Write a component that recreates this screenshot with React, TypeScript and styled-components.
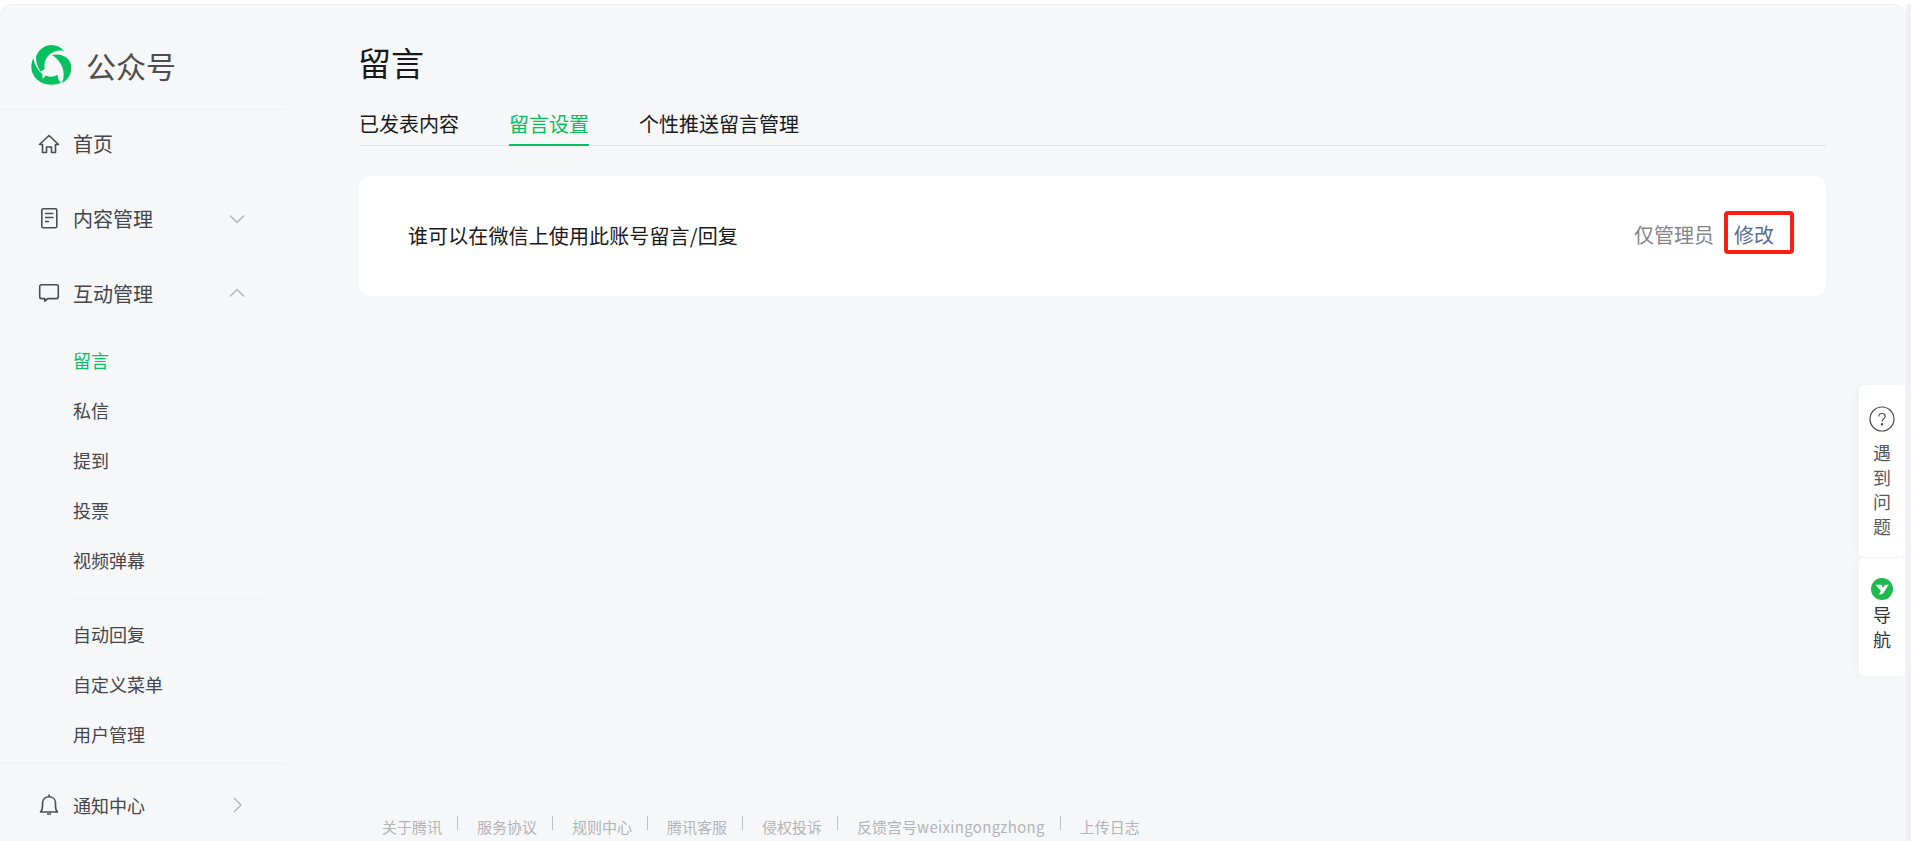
import React from "react";
import styled, { createGlobalStyle } from "styled-components";

const Global = createGlobalStyle`
  html, body { margin: 0; padding: 0; height: 100%; background: #fff; overflow: hidden; }
  #root { height: 100%; }
  * { box-sizing: border-box; }
  body { font-family: "Noto Sans CJK SC", "Liberation Sans", sans-serif; }
`;

const Page = styled.div`
  width: 1911px;
  height: 841px;
  padding-top: 4px;
  display: flex;
  position: relative;
  overflow: hidden;
  background: #fff;
`;

const Shell = styled.div`
  flex: 1;
  display: flex;
  background: #f6f7f9;
  border-top: 1px solid #ececee;
  border-top-left-radius: 12px;
  border-top-right-radius: 12px;
`;

const ScrollTrack = styled.div`
  width: 5px;
  background: #f1f1f3;
`;

const Sidebar = styled.aside`
  width: 286px;
  flex: none;
  display: flex;
  flex-direction: column;
`;

const Brand = styled.div`
  height: 105px;
  flex: none;
  padding: 40px 0 0 31px;
  display: flex;
  align-items: flex-start;
  gap: 15px;
  border-bottom: 1px solid #eeeff1;
`;

const BrandName = styled.span`
  font-size: 30px;
  line-height: 40px;
  color: #4d4d50;
`;

const Nav = styled.nav`
  display: flex;
  flex-direction: column;
  padding-top: 9px;
  flex: 1;
  min-height: 0;
`;

const NavRow = styled.div<{ $h: number; $top?: number }>`
  height: ${(p) => p.$h}px;
  flex: none;
  display: flex;
  align-items: center;
  padding: ${(p) => p.$top ?? 0}px 0 0 38px;
  font-size: 20px;
  color: #45454a;
`;

const IconSlot = styled.span`
  width: 35px;
  flex: none;
  display: flex;
  align-items: center;
`;

const RowLabel = styled.span<{ $size?: number }>`
  flex: none;
  width: 155px;
  font-size: ${(p) => p.$size ?? 20}px;
`;

const SubList = styled.div`
  padding-top: 17px;
  flex: none;
`;

const SubItem = styled.div<{ $active?: boolean }>`
  height: 50px;
  display: flex;
  align-items: center;
  padding-left: 73px;
  font-size: 18px;
  color: ${(p) => (p.$active ? "#07c160" : "#45454a")};
`;

const SubDivider = styled.div`
  height: 1px;
  margin: 13px 19px 10px 69px;
  background: #eeeff1;
`;

const NavDivider = styled.div`
  height: 1px;
  flex: none;
  margin-top: 4px;
  background: #eeeff1;
`;

const Main = styled.main`
  flex: 1;
  min-width: 0;
  display: flex;
  flex-direction: column;
  padding: 33px 80px 0 73px;
`;

const Title = styled.h1`
  margin: 0 0 0 -1px;
  font-size: 33px;
  line-height: 48px;
  font-weight: 400;
  color: #191919;
`;

const Tabs = styled.div`
  margin-top: 24px;
  height: 36px;
  display: flex;
  gap: 50px;
  border-bottom: 1px solid #e1e2e5;
`;

const Tab = styled.div<{ $active?: boolean }>`
  height: 36px;
  font-size: 20px;
  line-height: 28px;
  color: ${(p) => (p.$active ? "#07c160" : "#191919")};
  border-bottom: 2px solid ${(p) => (p.$active ? "#07c160" : "transparent")};
`;

const Card = styled.section`
  margin-top: 30px;
  height: 120px;
  flex: none;
  display: flex;
  align-items: center;
  justify-content: space-between;
  background: #fff;
  border-radius: 12px;
  padding: 0 52px 2px 49px;
`;

const CardLabel = styled.span`
  font-size: 20px;
  letter-spacing: 0.12px;
  color: #191919;
`;

const CardRight = styled.div`
  display: flex;
  align-items: center;
  gap: 20px;
  font-size: 20px;
  line-height: 24px;
`;

const Muted = styled.span`
  color: #85858a;
`;

const LinkText = styled.a`
  position: relative;
  color: #576b95;
`;

const Highlight = styled.span`
  position: absolute;
  left: -10px;
  right: -20px;
  top: -12px;
  bottom: -7px;
  border: 4px solid #fb1f12;
  border-radius: 4px;
`;

const Spacer = styled.div`
  flex: 1;
`;

const Footer = styled.footer`
  display: flex;
  align-items: center;
  height: 30px;
  padding-left: 23px;
  font-size: 15px;
  color: #b3b3b6;
`;

const FooterItem = styled.span`
  display: flex;
  align-items: center;
`;

const Latin = styled.span`
  letter-spacing: 0.33px;
`;

const FooterSep = styled.i`
  display: inline-block;
  width: 1px;
  height: 14px;
  margin: -6px 19px 0 15px;
  background: #c2c2c6;
`;

const Widget = styled.div`
  position: absolute;
  right: 6px;
  top: 385px;
  width: 46px;
  display: flex;
  flex-direction: column;
  gap: 1px;
`;

const WidgetPart = styled.div<{ $dark?: boolean; $h: number; $top: number }>`
  height: ${(p) => p.$h}px;
  padding-top: ${(p) => p.$top}px;
  background: #fff;
  border-radius: 5px;
  box-shadow: -4px 0 10px rgba(0, 0, 0, 0.025);
  display: flex;
  flex-direction: column;
  align-items: center;
  font-size: 18px;
  line-height: 24.700px;
  color: ${(p) => (p.$dark ? "#333336" : "#59595c")};
`;

const WidgetIcon = styled.span<{ $gap: number }>`
  display: flex;
  margin-bottom: ${(p) => p.$gap}px;
`;

const Logo = () => (
  <svg width="40" height="40" viewBox="0 0 40 40" fill="#07c160">
    <path d="M5 11.500C7.500 4.500 14 0 20.500 0C25.500 0 30 2 33 6C27 4.800 21.500 6.500 17.500 10.500C14 14 12.800 19 13.800 24L9.500 26.500C6.500 22 4.800 16.500 5 11.500Z" />
    <path d="M21 10C27 8.500 33 9.800 37 14C41.500 19 41 27 37.300 32.500C35.700 35 33.500 37 31 38C33 33 33.300 27 31 21.500C29 16.500 25.500 12.800 21 10Z" />
    <path d="M2.300 13C-.8 20-.3 27.500 4.500 33C10 39.500 20.500 41.500 30 37.800C28 36 26.500 33 26.500 29.800C22.500 32 18.800 32.300 15 30.500L11.800 33.800L11 28.800C6.500 25 3.500 19.500 2.300 13Z" />
  </svg>
);

const iconProps = { width: 22, height: 22, viewBox: "0 0 22 22", fill: "none", stroke: "#4d4d50", strokeWidth: 1.6 };

const HomeIcon = () => (
  <svg {...iconProps}>
    <path d="M1.500 11.500L11 2.500L20.500 11.500H17.500V19.500H13.500V14H8.500V19.500H4.500V11.500Z" strokeLinejoin="round" />
  </svg>
);
const DocIcon = () => (
  <svg {...iconProps}>
    <rect x="3.800" y="1.800" width="15" height="19" rx="1.500" />
    <path d="M7 6.500H15.500M7 10.500H15.500M7 14.500H11" />
  </svg>
);
const ChatIcon = () => (
  <svg {...iconProps}>
    <path d="M3.500 2.800H18.500C19.600 2.800 20.300 3.500 20.300 4.600V14.800C20.300 15.900 19.600 16.600 18.500 16.600H9.800L6.800 19.200V16.600H3.500C2.400 16.600 1.700 15.900 1.700 14.800V4.600C1.700 3.500 2.400 2.800 3.500 2.800Z" strokeLinejoin="round" />
  </svg>
);
const BellIcon = () => (
  <svg {...iconProps}>
    <path d="M2.500 18C4.300 16.500 4.500 14.500 4.500 12V9C4.500 5.300 7.300 2.800 11 2.800C14.700 2.800 17.500 5.300 17.500 9V12C17.500 14.500 17.700 16.500 19.500 18Z" strokeLinejoin="round" />
    <path d="M11 .5V2.800M9 20H13" />
  </svg>
);
const Chevron = ({ d }: { d: string }) => (
  <svg width="18" height="18" viewBox="0 0 18 18" fill="none" stroke="#b4b4b8" strokeWidth="1.400">
    <path d={d} />
  </svg>
);
const HelpIcon = () => (
  <svg width="26" height="26" viewBox="0 0 26 26" fill="none" stroke="#4d4d50" strokeWidth="1.200">
    <circle cx="13" cy="13" r="12" />
    <path d="M9.800 10.500C9.800 8.500 11.200 7.500 13 7.500C14.800 7.500 16.200 8.600 16.200 10.300C16.200 12.600 13 12.800 13 15.500" />
    <circle cx="13" cy="18.300" r=".6" fill="#4d4d50" />
  </svg>
);
const GuideIcon = () => (
  <svg width="22" height="22" viewBox="0 0 22 22">
    <circle cx="11" cy="11" r="11" fill="#1fb84f" />
    <path d="M4.500 6.800H10.500L12 10L14 6.800H17.800L12.500 14.800C11.500 16.200 10 16.500 8 16.500L9.800 12.800Z" fill="#fff" />
  </svg>
);

const FOOTER: React.ReactNode[] = [
  "关于腾讯",
  "服务协议",
  "规则中心",
  "腾讯客服",
  "侵权投诉",
  <>反馈宫号<Latin>weixingongzhong</Latin></>,
  "上传日志",
];

export default function App() {
  return (
    <Page>
      <Global />
      <Shell>
        <Sidebar>
          <Brand>
            <Logo />
            <BrandName>公众号</BrandName>
          </Brand>
          <Nav>
            <NavRow $h={49}>
              <IconSlot><HomeIcon /></IconSlot>
              <RowLabel>首页</RowLabel>
            </NavRow>
            <NavRow $h={75} $top={25}>
              <IconSlot><DocIcon /></IconSlot>
              <RowLabel>内容管理</RowLabel>
              <Chevron d="M2 6.500L9 13.500L16 6.500" />
            </NavRow>
            <NavRow $h={75} $top={25}>
              <IconSlot><ChatIcon /></IconSlot>
              <RowLabel>互动管理</RowLabel>
              <Chevron d="M2 12.500L9 5.500L16 12.500" />
            </NavRow>
            <SubList>
              <SubItem $active>留言</SubItem>
              <SubItem>私信</SubItem>
              <SubItem>提到</SubItem>
              <SubItem>投票</SubItem>
              <SubItem>视频弹幕</SubItem>
              <SubDivider />
              <SubItem>自动回复</SubItem>
              <SubItem>自定义菜单</SubItem>
              <SubItem>用户管理</SubItem>
            </SubList>
            <NavDivider />
            <NavRow $h={76} $top={6}>
              <IconSlot><BellIcon /></IconSlot>
              <RowLabel $size={18}>通知中心</RowLabel>
              <Chevron d="M6 2L13 9L6 16" />
            </NavRow>
          </Nav>
        </Sidebar>
        <Main>
          <Title>留言</Title>
          <Tabs>
            <Tab>已发表内容</Tab>
            <Tab $active>留言设置</Tab>
            <Tab>个性推送留言管理</Tab>
          </Tabs>
          <Card>
            <CardLabel>谁可以在微信上使用此账号留言/回复</CardLabel>
            <CardRight>
              <Muted>仅管理员</Muted>
              <LinkText>
                修改
                <Highlight />
              </LinkText>
            </CardRight>
          </Card>
          <Spacer />
          <Footer>
            {FOOTER.map((t, i) => (
              <FooterItem key={i}>
                {t}
                {i < FOOTER.length - 1 && <FooterSep />}
              </FooterItem>
            ))}
          </Footer>
        </Main>
      </Shell>
      <ScrollTrack />
      <Widget>
        <WidgetPart $h={172} $top={21}>
          <WidgetIcon $gap={8}><HelpIcon /></WidgetIcon>
          <span>遇</span>
          <span>到</span>
          <span>问</span>
          <span>题</span>
        </WidgetPart>
        <WidgetPart $h={118} $dark $top={20}>
          <WidgetIcon $gap={2}><GuideIcon /></WidgetIcon>
          <span>导</span>
          <span>航</span>
        </WidgetPart>
      </Widget>
    </Page>
  );
}
